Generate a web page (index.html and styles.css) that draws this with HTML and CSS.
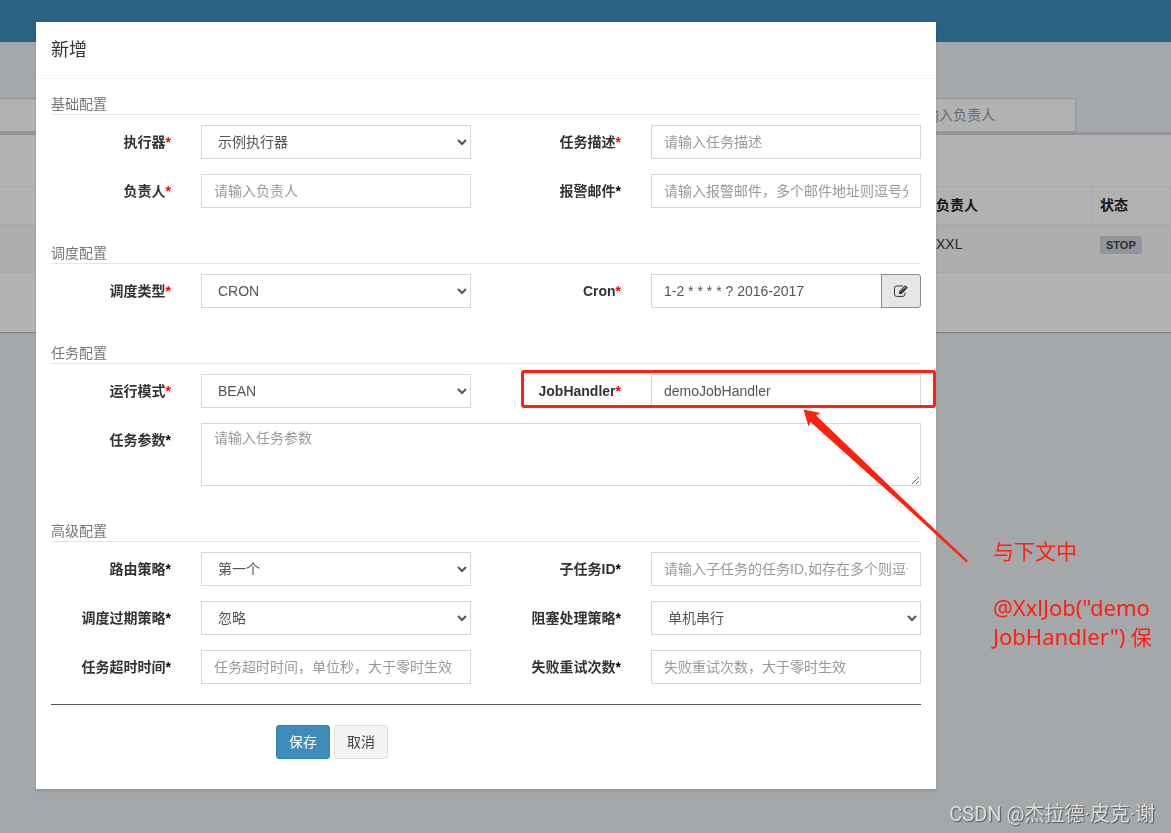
FILE: index.html
```html
<!DOCTYPE html>
<html lang="zh-CN">
<head>
<meta charset="utf-8">
<title>新增任务</title>
<link rel="stylesheet" href="styles.css">
</head>
<body>
<div class="page">
  <header class="navbar"></header>
  <main class="content">
    <div class="filters">
      <input class="control filter-input" type="text" aria-label="任务描述">
      <input class="control filter-input filter-author" type="text" placeholder="请输入负责人" aria-label="负责人">
    </div>
    <section class="box">
      <table class="jobs">
        <thead>
          <tr><th class="col-rest"></th><th class="col-author">负责人</th><th class="col-state">状态</th></tr>
        </thead>
        <tbody>
          <tr><td></td><td>XXL</td><td><span class="badge">STOP</span></td></tr>
        </tbody>
      </table>
    </section>
  </main>
</div>

<div class="backdrop"></div>

<div class="modal" role="dialog" aria-labelledby="modal-title">
  <div class="modal-header"><h4 class="modal-title" id="modal-title">新增</h4></div>
  <form class="modal-body">
    <section class="group">
      <h5 class="group-title">基础配置</h5>
      <div class="row">
        <label class="label" for="group">执行器<span class="required">*</span></label>
        <div class="field"><select class="control" id="group"><option>示例执行器</option></select></div>
        <label class="label" for="desc">任务描述<span class="required">*</span></label>
        <div class="field"><input class="control" id="desc" type="text" placeholder="请输入任务描述"></div>
      </div>
      <div class="row">
        <label class="label" for="author">负责人<span class="required">*</span></label>
        <div class="field"><input class="control" id="author" type="text" placeholder="请输入负责人"></div>
        <label class="label" for="mail">报警邮件<span class="optional">*</span></label>
        <div class="field"><input class="control" id="mail" type="text" placeholder="请输入报警邮件，多个邮件地址则逗号分隔"></div>
      </div>
    </section>

    <section class="group">
      <h5 class="group-title">调度配置</h5>
      <div class="row">
        <label class="label" for="schedule">调度类型<span class="required">*</span></label>
        <div class="field"><select class="control" id="schedule"><option>CRON</option></select></div>
        <label class="label" for="cron">Cron<span class="required">*</span></label>
        <div class="field input-group">
          <input class="control" id="cron" type="text" value="1-2 * * * * ? 2016-2017">
          <button class="addon" type="button" aria-label="编辑 Cron">
            <svg class="edit-icon" viewBox="0 0 14 12" aria-hidden="true">
              <path d="M11 7.500v1.700a2.200 2.200 0 0 1-2.200 2.200H2.700A2.200 2.200 0 0 1 .5 9.200V3.200A2.200 2.200 0 0 1 2.700 1h6.300" fill="none" stroke="currentColor"/>
              <path d="M5 6.400 11.200.2l2.600 2.600L7.600 9H5z" fill="currentColor"/>
              <path d="M6.500 6.700 10.900 2.300M9.900 1.500l2.600 2.600" stroke="#e6e6e6" stroke-width=".5"/>
            </svg>
          </button>
        </div>
      </div>
    </section>

    <section class="group">
      <h5 class="group-title">任务配置</h5>
      <div class="row">
        <label class="label" for="mode">运行模式<span class="required">*</span></label>
        <div class="field"><select class="control" id="mode"><option>BEAN</option></select></div>
        <label class="label" for="handler">JobHandler<span class="required">*</span></label>
        <div class="field"><input class="control" id="handler" type="text" value="demoJobHandler"></div>
      </div>
      <div class="row">
        <label class="label" for="param">任务参数<span class="optional">*</span></label>
        <div class="field field-wide"><textarea class="control area" id="param" placeholder="请输入任务参数"></textarea></div>
      </div>
    </section>

    <section class="group">
      <h5 class="group-title">高级配置</h5>
      <div class="row">
        <label class="label" for="route">路由策略<span class="optional">*</span></label>
        <div class="field"><select class="control" id="route"><option>第一个</option></select></div>
        <label class="label" for="child">子任务ID<span class="optional">*</span></label>
        <div class="field"><input class="control" id="child" type="text" placeholder="请输入子任务的任务ID,如存在多个则逗号分隔"></div>
      </div>
      <div class="row">
        <label class="label" for="misfire">调度过期策略<span class="optional">*</span></label>
        <div class="field"><select class="control" id="misfire"><option>忽略</option></select></div>
        <label class="label" for="block">阻塞处理策略<span class="optional">*</span></label>
        <div class="field"><select class="control" id="block"><option>单机串行</option></select></div>
      </div>
      <div class="row">
        <label class="label" for="timeout">任务超时时间<span class="optional">*</span></label>
        <div class="field"><input class="control" id="timeout" type="text" placeholder="任务超时时间，单位秒，大于零时生效"></div>
        <label class="label" for="retry">失败重试次数<span class="optional">*</span></label>
        <div class="field"><input class="control" id="retry" type="text" placeholder="失败重试次数，大于零时生效"></div>
      </div>
    </section>

    <div class="actions">
      <button class="btn btn-primary" type="button">保存</button>
      <button class="btn btn-default" type="button">取消</button>
    </div>
  </form>

  <div class="highlight"></div>
  <svg class="arrow" viewBox="0 0 166 154" aria-hidden="true">
    <path d="M.5.500 17.500 4 13 6.500 70 61 101 91 165 152 163.500 153.500 95 91 61 61 7.500 13 5.500 17.500z" fill="#ff2010"/>
  </svg>
  <p class="note">与下文中<br><br><span class="note-code">@XxlJob("demo<br>JobHandler")</span> 保</p>
</div>

<div class="watermark">CSDN @杰拉德·皮克·谢</div>
</body>
</html>
```
FILE: styles.css
```css
* { box-sizing: border-box; }

body {
  margin: 0;
  min-height: 100vh;
  overflow: hidden;
  background: #ebf1f4;
  color: #333;
  font: 14px/20px "Liberation Sans", "Noto Sans CJK SC", sans-serif;
}

.navbar { height: 42px; background: #3c8dbc; }
.content { padding-top: 56px; }

.control {
  display: block;
  width: 100%;
  height: 34px;
  margin: 0;
  padding: 6px 12px;
  border: 1px solid #d2d6de;
  border-radius: 0;
  background-color: #fff;
  color: #555;
  font: inherit;
}
.control::placeholder { color: #999; opacity: 1; }

.filters { display: flex; padding-right: 95px; }
.filter-input { flex: 1; border-left: 0; }
.filter-author { flex: 0 0 177px; }

.box {
  padding: 51px 0 59px;
  border-top: 3px solid #d2d6de;
  background: #fff;
  box-shadow: 0 1px 1px rgba(0, 0, 0, .2);
}
.jobs { width: 100%; table-layout: fixed; border-collapse: collapse; text-align: left; }
.jobs th, .jobs td { padding: 8px; border: 1px solid #f4f4f4; vertical-align: top; }
.jobs th:first-child, .jobs td:first-child { border-left: 0; }
.jobs th { height: 38px; border-bottom-width: 2px; color: #222; }
.jobs td { height: 48px; background: #f9f9f9; }
.col-author { width: 164px; }
.col-state { width: 79px; }
.badge {
  display: inline-block;
  padding: 3px 6px;
  border-radius: 3px;
  background: #d2d6de;
  color: #444;
  font-size: 11px;
  font-weight: bold;
  line-height: 12px;
}

.backdrop { position: fixed; inset: 0; background: rgba(0, 0, 0, .3); }

.modal {
  position: absolute;
  top: 22px;
  left: 36px;
  width: 900px;
  background: #fff;
  box-shadow: 0 2px 3px rgba(0, 0, 0, .13);
}
.modal-header { padding: 15px; border-bottom: 1px solid #f4f4f4; }
.modal-title { margin: 0; font-size: 18px; font-weight: 400; line-height: 26px; }
.modal-body { padding: 15px 15px 30px; }

.group { display: grid; gap: 15px; margin-bottom: 35px; }
.group:last-of-type { margin-bottom: 20px; }
.group-title {
  margin: 0 0 -5px;
  border-bottom: 1px solid #e5e5e5;
  color: #777;
  font-size: 14px;
  font-weight: 400;
  line-height: 20px;
}
.row { display: grid; grid-template-columns: 2fr 4fr 2fr 4fr; margin: 0 -15px; }
.label { padding: 7px 15px 0; text-align: right; font-weight: bold; }
.required { color: #f00; }
.optional { color: #000; }
.field { min-width: 0; padding: 0 15px; }
.field-wide { grid-column: span 3; }
.area { height: 63px; padding-top: 4px; resize: both; }

.input-group { display: flex; }
.addon {
  display: grid;
  place-items: center;
  flex: 0 0 40px;
  margin-left: -1px;
  padding: 0;
  border: 1px solid #8c8c8c;
  border-radius: 0 3px 3px 0;
  background: #e6e6e6;
  color: #333;
}
.edit-icon { width: 14px; height: 12px; }

.actions { display: flex; gap: 4px; padding: 20px 0 0 225px; border-top: 1px solid #555; }
.btn { height: 34px; padding: 6px 12px; border: 1px solid; border-radius: 3px; font: inherit; }
.btn-primary { border-color: #367fa9; background: #3c8dbc; color: #fff; }
.btn-default { border-color: #ddd; background: #f4f4f4; color: #444; }

.highlight {
  position: absolute;
  top: 348px;
  left: 485px;
  width: 415px;
  height: 38px;
  border: 3px solid #ff2010;
  border-radius: 3px;
  pointer-events: none;
}
.arrow { position: absolute; top: 387px; left: 767px; width: 166px; height: 154px; pointer-events: none; }
.note {
  position: absolute;
  top: 515px;
  left: 957px;
  margin: 0;
  color: #ff2010;
  font: 21px/28px "Noto Sans", "Noto Sans CJK SC", sans-serif;
  white-space: nowrap;
}
.note-code { font-size: 22px; }
.watermark {
  position: absolute;
  right: 16px;
  bottom: 6px;
  color: #dcdcdc;
  font: 20px/26px Roboto, "Noto Sans CJK SC", sans-serif;
  text-shadow: 1px 1px 1px #555;
}
```
